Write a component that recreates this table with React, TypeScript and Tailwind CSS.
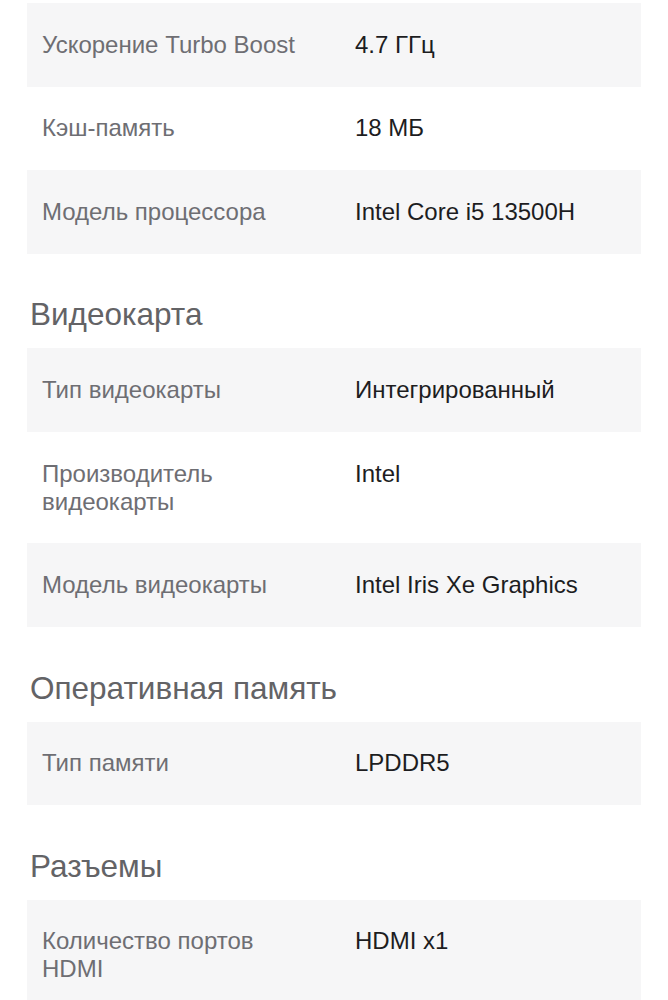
import React from 'react';

type Spec = { label: string; value: string };
type Section = { title?: string; rows: Spec[] };

const sections: Section[] = [
  {
    rows: [
      { label: 'Ускорение Turbo Boost', value: '4.7 ГГц' },
      { label: 'Кэш-память', value: '18 МБ' },
      { label: 'Модель процессора', value: 'Intel Core i5 13500H' },
    ],
  },
  {
    title: 'Видеокарта',
    rows: [
      { label: 'Тип видеокарты', value: 'Интегрированный' },
      { label: 'Производитель видеокарты', value: 'Intel' },
      { label: 'Модель видеокарты', value: 'Intel Iris Xe Graphics' },
    ],
  },
  {
    title: 'Оперативная память',
    rows: [{ label: 'Тип памяти', value: 'LPDDR5' }],
  },
  {
    title: 'Разъемы',
    rows: [{ label: 'Количество портов HDMI', value: 'HDMI x1' }],
  },
];

function SpecRow({ spec, gray }: { spec: Spec; gray: boolean }) {
  return (
    <div className={`flex py-[27.8px] pl-[15px] pr-4 ${gray ? 'bg-[#f6f6f7]' : 'bg-white'}`}>
      <div className="w-[313px] shrink-0 pr-[40px] text-[24px] leading-[28px] text-[#6e6e73]">
        {spec.label}
      </div>
      <div className="flex-1 text-[24px] leading-[28px] text-[#1d1d1f]">{spec.value}</div>
    </div>
  );
}

export default function App() {
  return (
    <div
      className="min-h-screen bg-white px-[27px] pt-[3px]"
      style={{ fontFamily: '"Liberation Sans", Arial, sans-serif' }}
    >
      {sections.map((section, i) => (
        <div key={i}>
          {section.title && (
            <h2 className="mt-[42.5px] mb-[16px] pl-[3px] text-[31.5px] leading-[36px] text-[#636366]">
              {section.title}
            </h2>
          )}
          <div>
            {section.rows.map((row, j) => (
              <SpecRow key={row.label} spec={row} gray={j % 2 === 0} />
            ))}
          </div>
        </div>
      ))}
    </div>
  );
}
